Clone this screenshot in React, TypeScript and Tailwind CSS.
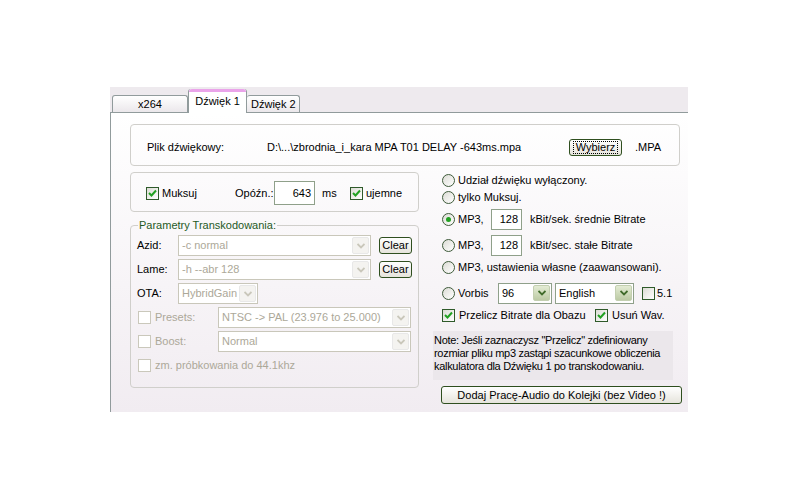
import React from 'react';

// Windows XP (olive) style dialog: audio tab of a transcoding tool

const Check = ({ color = '#21a121' }: { color?: string }) => (
  <svg width="9" height="9" viewBox="0 0 9 9">
    <path d="M1 4 L3.5 6.5 L8 1.5" fill="none" stroke={color} strokeWidth="2" />
  </svg>
);

function Checkbox({ checked = false, disabled = false }: { checked?: boolean; disabled?: boolean }) {
  return (
    <span
      className={
        disabled
          ? 'flex h-[13px] w-[13px] shrink-0 items-center justify-center border border-[#cac8bb] bg-white'
          : 'flex h-[13px] w-[13px] shrink-0 items-center justify-center border border-[#2f5a2a] bg-gradient-to-br from-[#dcdcd5] to-white'
      }
    >
      {checked && <Check />}
    </span>
  );
}

function Radio({ checked = false }: { checked?: boolean }) {
  return (
    <span className="flex h-[13px] w-[13px] shrink-0 items-center justify-center rounded-full border border-[#3e5a3a] bg-gradient-to-br from-[#dcdcd5] to-white">
      {checked && <span className="h-[5px] w-[5px] rounded-full bg-[#21a121]" />}
    </span>
  );
}

function Chevron({ color }: { color: string }) {
  return (
    <svg width="8" height="6" viewBox="0 0 8 6">
      <path d="M0.5 1 L4 4.5 L7.5 1" fill="none" stroke={color} strokeWidth="1.8" />
    </svg>
  );
}

function Select({ value, disabled = false, className = '' }: { value: string; disabled?: boolean; className?: string }) {
  return (
    <div
      className={
        'flex h-[21px] items-center border bg-white p-[1px] ' +
        (disabled ? 'border-[#c9c7ba] text-[#aca899] ' : 'border-[#8fa08a] text-black ') +
        className
      }
    >
      <span className="flex-1 overflow-hidden whitespace-nowrap pl-[2px]">{value}</span>
      {disabled ? (
        <span className="flex h-[17px] w-[17px] items-center justify-center rounded-[2px] border border-[#e8e8e8] bg-[#f4f3f0]">
          <Chevron color="#c9c7ba" />
        </span>
      ) : (
        <span className="flex h-[16px] w-[17px] items-center justify-center rounded-[2px] border border-[#c3cfb0] bg-gradient-to-b from-[#e4ecd4] to-[#bccaa4]">
          <Chevron color="#3f6a2a" />
        </span>
      )}
    </div>
  );
}

function Button({ children, className = '', focused = false }: { children: React.ReactNode; className?: string; focused?: boolean }) {
  return (
    <div
      className={
        'flex items-center justify-center rounded-[3px] border border-[#2f4f1f] bg-gradient-to-b from-white to-[#e6e4dc] ' +
        className
      }
    >
      {focused ? (
        <span className="border border-dotted border-black px-[2px] leading-[11px]">{children}</span>
      ) : (
        children
      )}
    </div>
  );
}

function TextBox({ value, className = '' }: { value: string; className?: string }) {
  return (
    <div className={'flex items-center justify-end border border-[#8fa08a] bg-white pr-[3px] ' + className}>{value}</div>
  );
}

export default function App() {
  return (
    <div className="min-h-[500px] w-[800px] bg-white font-['Liberation_Sans',Arial,sans-serif] text-[11px] leading-[13px] text-black">
      <div className="ml-[110px] w-[578px] pt-[87px]">
        {/* tab strip */}
        <div className="flex h-[25px] items-end bg-[#eeeaee] pl-[2px]">
          <div className="flex h-[17px] w-[76px] items-center justify-center rounded-t-[3px] border border-b-0 border-[#919b9c] bg-gradient-to-b from-white to-[#ebe7eb]">
            x264
          </div>
          <div className="relative z-10 -mb-px flex h-[24px] w-[59px] flex-col rounded-t-[3px] border-x border-[#919b9c] bg-white">
            <div className="h-[3px] rounded-t-[3px] bg-[#eaa4ea]" />
            <div className="flex flex-1 items-center justify-center pb-[3px]">Dźwięk 1</div>
          </div>
          <div className="flex h-[17px] w-[53px] items-center rounded-t-[3px] border border-b-0 border-l-0 border-[#919b9c] bg-gradient-to-b from-white to-[#ebe7eb] pl-[4px]">
            Dźwięk 2
          </div>
        </div>

        {/* tab page */}
        <div className="h-[300px] border-l border-t border-[#919b9c] bg-gradient-to-b from-white to-[#f1ecf1] pt-[11px]">
          {/* file */}
          <div className="ml-[19px] flex h-[42px] w-[550px] items-center rounded-[4px] border border-[#d0cfcb] pl-[16px] pt-[4px]">
            <span className="w-[120px]">Plik dźwiękowy:</span>
            <span className="w-[302px] whitespace-nowrap">D:\...\zbrodnia_i_kara MPA T01 DELAY -643ms.mpa</span>
            <Button focused className="h-[17px] w-[53px]">
              Wybierz
            </Button>
            <span className="ml-[13px]">.MPA</span>
          </div>

          <div className="mt-[6px] flex">
            {/* left column */}
            <div className="ml-[19px] w-[289px]">
              <div className="flex h-[40px] items-center rounded-[4px] border border-[#d0cfcb] pl-[15px] pt-[2px]">
                <div className="flex w-[89px] items-center gap-[3px]">
                  <Checkbox checked />
                  <span>Muksuj</span>
                </div>
                <span className="w-[39px]">Opóźn.:</span>
                <TextBox value="643" className="h-[24px] w-[41px]" />
                <span className="ml-[7px] w-[28px]">ms</span>
                <div className="flex items-center gap-[3px]">
                  <Checkbox checked />
                  <span>ujemne</span>
                </div>
              </div>

              <fieldset className="mt-[7px] h-[169px] rounded-[4px] border border-[#d0cfcb] pl-[6px]">
                <legend className="ml-[1px] px-[1px] text-[#1f5a1f]">Parametry Transkodowania:</legend>
                <div className="mt-[3px] flex items-center">
                  <span className="w-[41px]">Azid:</span>
                  <Select disabled value="-c normal" className="w-[193px]" />
                  <Button className="ml-[8px] h-[17px] w-[33px]">Clear</Button>
                </div>
                <div className="mt-[3px] flex items-center">
                  <span className="w-[41px]">Lame:</span>
                  <Select disabled value="-h --abr 128" className="w-[193px]" />
                  <Button className="ml-[8px] h-[17px] w-[33px]">Clear</Button>
                </div>
                <div className="mt-[3px] flex items-center">
                  <span className="w-[41px]">OTA:</span>
                  <Select disabled value="HybridGain" className="w-[80px]" />
                </div>
                <div className="mt-[3px] flex items-center text-[#aca899]">
                  <div className="flex w-[81px] items-center gap-[4px] pl-[1px]">
                    <Checkbox disabled />
                    <span>Presets:</span>
                  </div>
                  <Select disabled value="NTSC -> PAL (23.976 to 25.000)" className="w-[193px]" />
                </div>
                <div className="mt-[3px] flex items-center text-[#aca899]">
                  <div className="flex w-[81px] items-center gap-[4px] pl-[1px]">
                    <Checkbox disabled />
                    <span>Boost:</span>
                  </div>
                  <Select disabled value="Normal" className="w-[193px]" />
                </div>
                <div className="mt-[7px] flex items-center gap-[4px] pl-[1px] text-[#aca899]">
                  <Checkbox disabled />
                  <span>zm. próbkowania do 44.1khz</span>
                </div>
              </fieldset>
            </div>

            {/* right column */}
            <div className="ml-[14px] w-[249px]">
              <div className="flex h-[17px] items-center gap-[3px] pl-[9px]">
                <Radio />
                <span>Udział dźwięku wyłączony.</span>
              </div>
              <div className="flex h-[17px] items-center gap-[3px] pl-[9px]">
                <Radio />
                <span>tylko Muksuj.</span>
              </div>
              <div className="flex h-[27px] items-center pl-[9px]">
                <Radio checked />
                <span className="ml-[3px] w-[33px]">MP3,</span>
                <TextBox value="128" className="h-[21px] w-[31px]" />
                <span className="ml-[8px]">kBit/sek. średnie Bitrate</span>
              </div>
              <div className="flex h-[25px] items-center pl-[9px]">
                <Radio />
                <span className="ml-[3px] w-[33px]">MP3,</span>
                <TextBox value="128" className="h-[21px] w-[31px]" />
                <span className="ml-[8px]">kBit/sec. stałe Bitrate</span>
              </div>
              <div className="flex h-[19px] items-center gap-[3px] pl-[9px]">
                <Radio />
                <span>MP3, ustawienia własne (zaawansowani).</span>
              </div>
              <div className="mt-[6px] flex h-[20px] items-center pl-[9px]">
                <Radio />
                <span className="ml-[3px] w-[40px]">Vorbis</span>
                <Select value="96" className="h-[20px] w-[54px]" />
                <Select value="English" className="ml-[3px] h-[20px] w-[79px]" />
                <span className="ml-[8px]">
                  <Checkbox />
                </span>
                <span className="ml-[2px]">5.1</span>
              </div>
              <div className="mt-[4px] flex h-[17px] items-center pl-[9px]">
                <div className="flex w-[153px] items-center gap-[4px]">
                  <Checkbox checked />
                  <span>Przelicz Bitrate dla Obazu</span>
                </div>
                <div className="flex items-center gap-[4px]">
                  <Checkbox checked />
                  <span>Usuń Wav.</span>
                </div>
              </div>
              <div className="mt-[7px] h-[49px] w-[240px] whitespace-nowrap bg-[#ebe7eb] pl-[1px] pt-[3px] tracking-[-0.3px]">
                <p>Note: Jeśli zaznaczysz "Przelicz" zdefiniowany</p>
                <p>rozmiar pliku mp3 zastąpi szacunkowe obliczenia</p>
                <p>kalkulatora dla Dźwięku 1 po transkodowaniu.</p>
              </div>
              <Button className="ml-[8px] mt-[6px] h-[18px] w-[241px]">Dodaj Pracę-Audio do Kolejki (bez Video !)</Button>
            </div>
          </div>
        </div>
      </div>
    </div>
  );
}
